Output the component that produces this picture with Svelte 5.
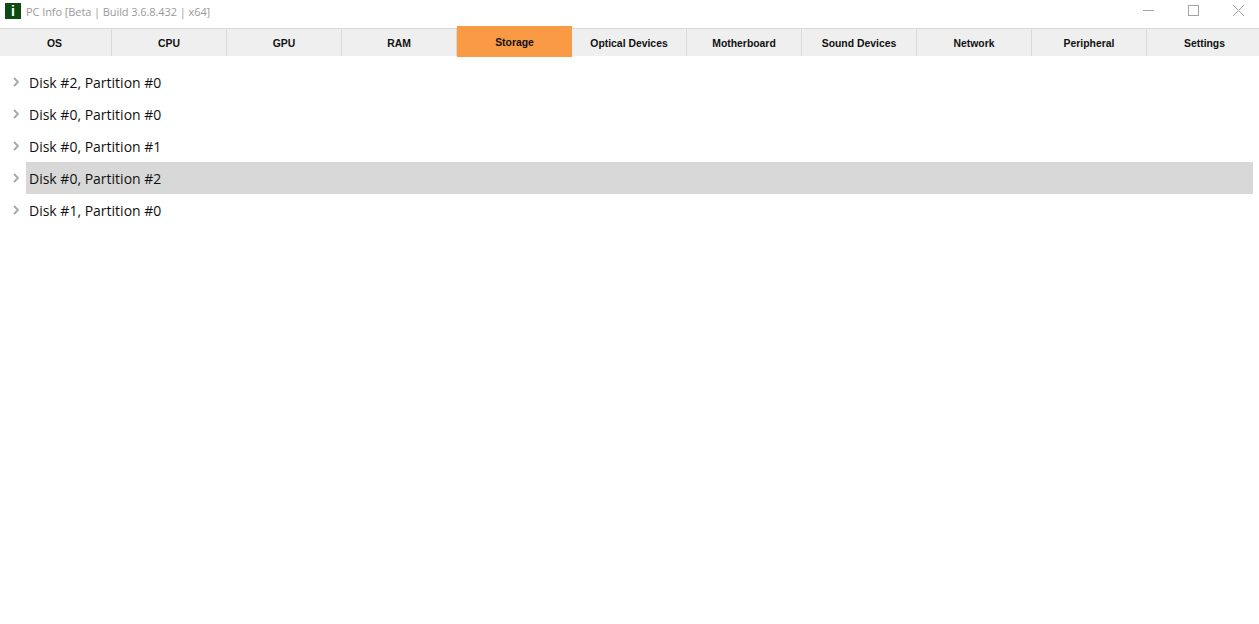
<script>
	const tabs = ['OS', 'CPU', 'GPU', 'RAM', 'Storage', 'Optical Devices', 'Motherboard', 'Sound Devices', 'Network', 'Peripheral', 'Settings'];
	const active = 'Storage';

	const disks = [
		{ name: 'Disk #2, Partition #0' },
		{ name: 'Disk #0, Partition #0' },
		{ name: 'Disk #0, Partition #1' },
		{ name: 'Disk #0, Partition #2', selected: true },
		{ name: 'Disk #1, Partition #0' }
	];
</script>

<div class="window">
	<header class="titlebar">
		<div class="app-icon"><span>i</span></div>
		<div class="title">PC Info [Beta | Build 3.6.8.432 | x64]</div>
		<div class="controls">
			<button aria-label="Minimize">
				<svg width="11" height="11" viewBox="0 0 11 11"><line x1="0" y1="5.5" x2="11" y2="5.5" /></svg>
			</button>
			<button aria-label="Maximize">
				<svg width="11" height="11" viewBox="0 0 11 11"><rect x="0.5" y="0.5" width="10" height="10" /></svg>
			</button>
			<button aria-label="Close">
				<svg width="11" height="11" viewBox="0 0 11 11"><line x1="0" y1="0" x2="11" y2="11" /><line x1="11" y1="0" x2="0" y2="11" /></svg>
			</button>
		</div>
	</header>

	<nav class="tabs">
		{#each tabs as tab}
			<button class="tab" class:active={tab === active}>{tab}</button>
		{/each}
	</nav>

	<ul class="tree">
		{#each disks as disk}
			<li class="row">
				<svg class="chevron" width="6" height="10" viewBox="0 0 6 10"><path d="M1 1l4 4-4 4" /></svg>
				<span class="label" class:selected={disk.selected}>{disk.name}</span>
			</li>
		{/each}
	</ul>
</div>

<style>
	:global(body) {
		margin: 0;
		background: #fff;
	}

	.window {
		height: 624px;
		overflow: hidden;
		background: #fff;
		font-family: 'Open Sans', 'Noto Sans', sans-serif;
	}

	.titlebar {
		height: 28px;
		box-sizing: border-box;
		display: flex;
		align-items: center;
		padding-left: 5px;
	}

	.app-icon {
		width: 16px;
		height: 16px;
		margin-top: -6px;
		background: #0e4a14;
		color: #fff;
		display: flex;
		align-items: center;
		justify-content: center;
		font: bold 14px 'Liberation Sans', sans-serif;
	}

	.title {
		margin-left: 5px;
		margin-top: -6px;
		font-size: 11px;
		letter-spacing: -0.08px;
		color: #9a9a9a;
	}

	.controls {
		margin-left: auto;
		margin-right: -2px;
		display: flex;
		margin-top: -8px;
	}

	.controls button {
		width: 45px;
		height: 20px;
		padding: 0;
		border: 0;
		background: none;
		display: flex;
		align-items: center;
		justify-content: center;
	}

	.controls svg {
		fill: none;
		stroke: #a5a3ad;
		stroke-width: 1;
	}

	.tabs {
		height: 28px;
		box-sizing: border-box;
		display: grid;
		grid-template-columns: 112px repeat(9, 115px) 1fr;
		background: #efefef;
		border-top: 1px solid #d9d9d9;
	}

	.tab {
		padding: 1px 0 0;
		border: 0;
		border-right: 1px solid #d9d9d9;
		background: none;
		color: #111;
		font: bold 10.4px 'Liberation Sans', Arial, sans-serif;
	}

	.tab:first-child {
		padding-right: 2px;
	}

	.tab:last-child {
		padding-left: 3px;
		border-right: 0;
	}

	.tab.active {
		margin: -3px 0 -1px;
		border-right: 0;
		background: #fb9a45;
	}

	.tree {
		list-style: none;
		margin: 10px 0 0;
		padding: 0 6px 0 0;
	}

	.row {
		height: 32px;
		display: flex;
		align-items: center;
	}

	.chevron {
		width: 6px;
		margin: 0 7px 0 13px;
		fill: none;
		stroke: #a8a4a4;
		stroke-width: 1.8;
	}

	.label {
		flex: 1;
		height: 32px;
		line-height: 34px;
		padding-left: 3px;
		font-size: 14px;
		color: #111;
	}

	.label.selected {
		background: #d8d8d8;
	}
</style>
